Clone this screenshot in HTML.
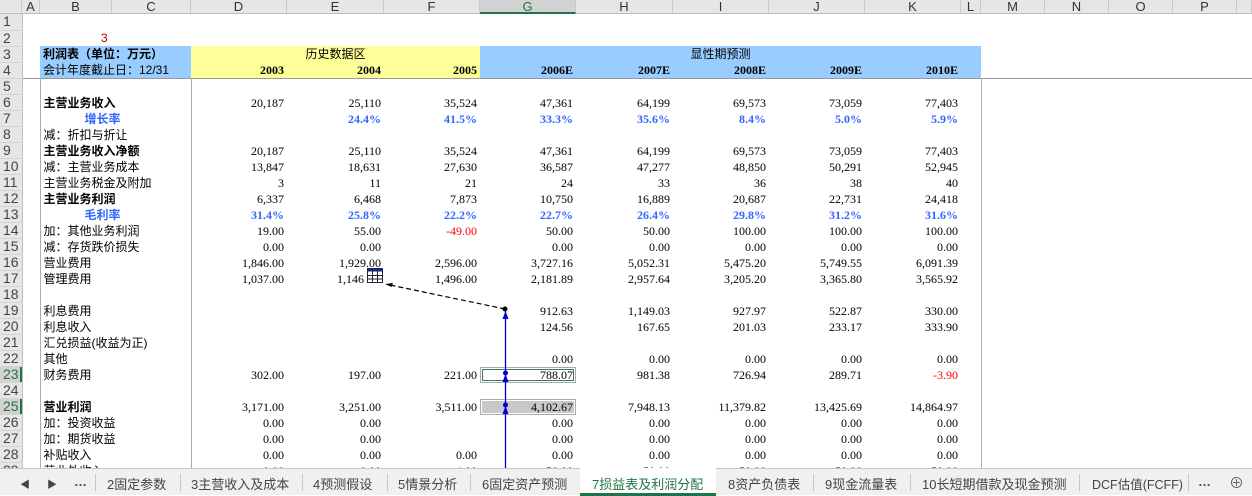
<!DOCTYPE html>
<html><head><meta charset="utf-8"><style>
*{margin:0;padding:0;box-sizing:border-box}
body{width:1252px;height:495px;overflow:hidden;background:#fff;position:relative;font-family:"Liberation Sans","Noto Sans CJK SC",sans-serif;font-size:12px;color:#000}
.ch{position:absolute;top:0;height:14px;background:#e6e6e6;border-bottom:1px solid #bdbdbd;border-right:1px solid #c8c8c8;text-align:center;font-size:13px;line-height:13px;color:#333}
.ch.sel{background:#d2d2d2;border-bottom:2px solid #217346;color:#217346}
table{position:absolute;left:0;top:14px;border-collapse:collapse;table-layout:fixed;width:1252px}
td{height:16px;padding:0 3px;white-space:nowrap;overflow:visible;line-height:16px;font-size:12px}
td.rh{background:#e6e6e6;border-right:1px solid #bdbdbd;border-bottom:1px solid #d4d4d4;color:#444;font-size:14px;padding:0 0 0 3px;line-height:15px}
td.rh.s{background:#d2d2d2;color:#217346;box-shadow:inset -2px 0 0 #217346}
.n{text-align:right;font-family:"Liberation Serif","Noto Serif CJK SC",serif}
.b{font-weight:bold}
.bl{color:#3366ff;font-weight:bold}
.r{color:#ff0000}
.blue{background:#99ccff}.yel{background:#ffff99}
td.e{border-right:1px solid #9bc}
.tabs{position:absolute;left:0;top:468px;width:1252px;height:27px;background:#f0f0f0;border-top:1px solid #c6c6c6;font-size:13px;color:#444}
.tabs span{position:absolute;top:5px}
.sep{position:absolute;top:5px;width:1px;height:17px;background:#c6c6c6}
</style></head><body>
<div class="ch" style="left:0;width:22px"></div>
<div class="ch" style="left:22px;width:18px">A</div>
<div class="ch" style="left:40px;width:72px">B</div>
<div class="ch" style="left:112px;width:79px">C</div>
<div class="ch" style="left:191px;width:96px">D</div>
<div class="ch" style="left:287px;width:97px">E</div>
<div class="ch" style="left:384px;width:96px">F</div>
<div class="ch sel" style="left:480px;width:96px">G</div>
<div class="ch" style="left:576px;width:97px">H</div>
<div class="ch" style="left:673px;width:96px">I</div>
<div class="ch" style="left:769px;width:96px">J</div>
<div class="ch" style="left:865px;width:96px">K</div>
<div class="ch" style="left:961px;width:20px">L</div>
<div class="ch" style="left:981px;width:64px">M</div>
<div class="ch" style="left:1045px;width:64px">N</div>
<div class="ch" style="left:1109px;width:64px">O</div>
<div class="ch" style="left:1173px;width:64px">P</div>
<div class="ch" style="left:1237px;width:15px"></div>
<table>
<colgroup><col style="width:22px"><col style="width:18px"><col style="width:72px"><col style="width:79px"><col style="width:96px"><col style="width:97px"><col style="width:96px"><col style="width:96px"><col style="width:97px"><col style="width:96px"><col style="width:96px"><col style="width:96px"><col style="width:20px"><col style="width:271px"></colgroup>
<tr><td class="rh">1</td><td></td><td></td><td></td><td></td><td></td><td></td><td></td><td></td><td></td><td></td><td></td><td></td><td></td></tr>
<tr><td class="rh">2</td><td></td><td colspan="2" style="color:#c00000;padding-left:61px">3</td><td></td><td></td><td></td><td></td><td></td><td></td><td></td><td></td><td></td><td></td></tr>
<tr><td class="rh">3</td><td></td><td colspan="2" class="blue b">利润表（单位：万元）</td><td colspan="3" class="yel" style="text-align:center">历史数据区</td><td colspan="6" class="blue" style="text-align:center;padding-right:23px">显性期预测</td><td></td></tr>
<tr style="border-bottom:1px solid #999"><td class="rh">4</td><td></td><td colspan="2" class="blue">会计年度截止日：12/31</td><td class="yel n b">2003</td><td class="yel n b">2004</td><td class="yel n b">2005</td><td class="blue n b">2006E</td><td class="blue n b">2007E</td><td class="blue n b">2008E</td><td class="blue n b">2009E</td><td class="blue n b">2010E</td><td class="blue"></td><td></td></tr>
<tr><td class="rh">5</td><td></td><td colspan="2" style="border-left:1px solid #aac;border-right:1px solid #aaa"></td><td></td><td></td><td></td><td></td><td></td><td></td><td></td><td></td><td class="e"></td><td></td></tr>
<tr><td class="rh">6</td><td></td><td colspan="2" class="b" style="border-left:1px solid #aac;border-right:1px solid #aaa">主营业务收入</td><td class="n">20,187</td><td class="n">25,110</td><td class="n">35,524</td><td class="n">47,361</td><td class="n">64,199</td><td class="n">69,573</td><td class="n">73,059</td><td class="n">77,403</td><td class="e"></td><td></td></tr>
<tr><td class="rh">7</td><td></td><td colspan="2" class="bl" style="padding-left:44px;border-left:1px solid #aac;border-right:1px solid #aaa">增长率</td><td></td><td class="n bl">24.4%</td><td class="n bl">41.5%</td><td class="n bl">33.3%</td><td class="n bl">35.6%</td><td class="n bl">8.4%</td><td class="n bl">5.0%</td><td class="n bl">5.9%</td><td class="e"></td><td></td></tr>
<tr><td class="rh">8</td><td></td><td colspan="2" style="border-left:1px solid #aac;border-right:1px solid #aaa">减：折扣与折让</td><td></td><td></td><td></td><td></td><td></td><td></td><td></td><td></td><td class="e"></td><td></td></tr>
<tr><td class="rh">9</td><td></td><td colspan="2" class="b" style="border-left:1px solid #aac;border-right:1px solid #aaa">主营业务收入净额</td><td class="n">20,187</td><td class="n">25,110</td><td class="n">35,524</td><td class="n">47,361</td><td class="n">64,199</td><td class="n">69,573</td><td class="n">73,059</td><td class="n">77,403</td><td class="e"></td><td></td></tr>
<tr><td class="rh">10</td><td></td><td colspan="2" style="border-left:1px solid #aac;border-right:1px solid #aaa">减：主营业务成本</td><td class="n">13,847</td><td class="n">18,631</td><td class="n">27,630</td><td class="n">36,587</td><td class="n">47,277</td><td class="n">48,850</td><td class="n">50,291</td><td class="n">52,945</td><td class="e"></td><td></td></tr>
<tr><td class="rh">11</td><td></td><td colspan="2" style="border-left:1px solid #aac;border-right:1px solid #aaa">主营业务税金及附加</td><td class="n">3</td><td class="n">11</td><td class="n">21</td><td class="n">24</td><td class="n">33</td><td class="n">36</td><td class="n">38</td><td class="n">40</td><td class="e"></td><td></td></tr>
<tr><td class="rh">12</td><td></td><td colspan="2" class="b" style="border-left:1px solid #aac;border-right:1px solid #aaa">主营业务利润</td><td class="n">6,337</td><td class="n">6,468</td><td class="n">7,873</td><td class="n">10,750</td><td class="n">16,889</td><td class="n">20,687</td><td class="n">22,731</td><td class="n">24,418</td><td class="e"></td><td></td></tr>
<tr><td class="rh">13</td><td></td><td colspan="2" class="bl" style="padding-left:44px;border-left:1px solid #aac;border-right:1px solid #aaa">毛利率</td><td class="n bl">31.4%</td><td class="n bl">25.8%</td><td class="n bl">22.2%</td><td class="n bl">22.7%</td><td class="n bl">26.4%</td><td class="n bl">29.8%</td><td class="n bl">31.2%</td><td class="n bl">31.6%</td><td class="e"></td><td></td></tr>
<tr><td class="rh">14</td><td></td><td colspan="2" style="border-left:1px solid #aac;border-right:1px solid #aaa">加：其他业务利润</td><td class="n">19.00</td><td class="n">55.00</td><td class="n r">-49.00</td><td class="n">50.00</td><td class="n">50.00</td><td class="n">100.00</td><td class="n">100.00</td><td class="n">100.00</td><td class="e"></td><td></td></tr>
<tr><td class="rh">15</td><td></td><td colspan="2" style="border-left:1px solid #aac;border-right:1px solid #aaa">减：存货跌价损失</td><td class="n">0.00</td><td class="n">0.00</td><td></td><td class="n">0.00</td><td class="n">0.00</td><td class="n">0.00</td><td class="n">0.00</td><td class="n">0.00</td><td class="e"></td><td></td></tr>
<tr><td class="rh">16</td><td></td><td colspan="2" style="border-left:1px solid #aac;border-right:1px solid #aaa">营业费用</td><td class="n">1,846.00</td><td class="n">1,929.00</td><td class="n">2,596.00</td><td class="n">3,727.16</td><td class="n">5,052.31</td><td class="n">5,475.20</td><td class="n">5,749.55</td><td class="n">6,091.39</td><td class="e"></td><td></td></tr>
<tr><td class="rh">17</td><td></td><td colspan="2" style="border-left:1px solid #aac;border-right:1px solid #aaa">管理费用</td><td class="n">1,037.00</td><td class="n" style="padding-right:4px">1,146<span style="display:inline-block;width:16px"></span></td><td class="n">1,496.00</td><td class="n">2,181.89</td><td class="n">2,957.64</td><td class="n">3,205.20</td><td class="n">3,365.80</td><td class="n">3,565.92</td><td class="e"></td><td></td></tr>
<tr><td class="rh">18</td><td></td><td colspan="2" style="border-left:1px solid #aac;border-right:1px solid #aaa"></td><td></td><td></td><td></td><td></td><td></td><td></td><td></td><td></td><td class="e"></td><td></td></tr>
<tr><td class="rh">19</td><td></td><td colspan="2" style="border-left:1px solid #aac;border-right:1px solid #aaa">利息费用</td><td></td><td></td><td></td><td class="n">912.63</td><td class="n">1,149.03</td><td class="n">927.97</td><td class="n">522.87</td><td class="n">330.00</td><td class="e"></td><td></td></tr>
<tr><td class="rh">20</td><td></td><td colspan="2" style="border-left:1px solid #aac;border-right:1px solid #aaa">利息收入</td><td></td><td></td><td></td><td class="n">124.56</td><td class="n">167.65</td><td class="n">201.03</td><td class="n">233.17</td><td class="n">333.90</td><td class="e"></td><td></td></tr>
<tr><td class="rh">21</td><td></td><td colspan="2" style="border-left:1px solid #aac;border-right:1px solid #aaa">汇兑损益(收益为正)</td><td></td><td></td><td></td><td></td><td></td><td></td><td></td><td></td><td class="e"></td><td></td></tr>
<tr><td class="rh">22</td><td></td><td colspan="2" style="border-left:1px solid #aac;border-right:1px solid #aaa">其他</td><td></td><td></td><td></td><td class="n">0.00</td><td class="n">0.00</td><td class="n">0.00</td><td class="n">0.00</td><td class="n">0.00</td><td class="e"></td><td></td></tr>
<tr><td class="rh s">23</td><td></td><td colspan="2" style="border-left:1px solid #aac;border-right:1px solid #aaa">财务费用</td><td class="n">302.00</td><td class="n">197.00</td><td class="n">221.00</td><td class="n" style="outline:1px solid #aaa;outline-offset:-1px;box-shadow:inset 0 0 0 2px #fff,inset 0 0 0 3px #3a7a5a">788.07</td><td class="n">981.38</td><td class="n">726.94</td><td class="n">289.71</td><td class="n r">-3.90</td><td class="e"></td><td></td></tr>
<tr><td class="rh">24</td><td></td><td colspan="2" style="border-left:1px solid #aac;border-right:1px solid #aaa"></td><td></td><td></td><td></td><td></td><td></td><td></td><td></td><td></td><td class="e"></td><td></td></tr>
<tr><td class="rh s">25</td><td></td><td colspan="2" class="b" style="border-left:1px solid #aac;border-right:1px solid #aaa">营业利润</td><td class="n">3,171.00</td><td class="n">3,251.00</td><td class="n">3,511.00</td><td class="n" style="background:#c8c8c8;box-shadow:inset 0 0 0 1px #aaa,inset 0 0 0 2px #fff">4,102.67</td><td class="n">7,948.13</td><td class="n">11,379.82</td><td class="n">13,425.69</td><td class="n">14,864.97</td><td class="e"></td><td></td></tr>
<tr><td class="rh">26</td><td></td><td colspan="2" style="border-left:1px solid #aac;border-right:1px solid #aaa">加：投资收益</td><td class="n">0.00</td><td class="n">0.00</td><td></td><td class="n">0.00</td><td class="n">0.00</td><td class="n">0.00</td><td class="n">0.00</td><td class="n">0.00</td><td class="e"></td><td></td></tr>
<tr><td class="rh">27</td><td></td><td colspan="2" style="border-left:1px solid #aac;border-right:1px solid #aaa">加：期货收益</td><td class="n">0.00</td><td class="n">0.00</td><td></td><td class="n">0.00</td><td class="n">0.00</td><td class="n">0.00</td><td class="n">0.00</td><td class="n">0.00</td><td class="e"></td><td></td></tr>
<tr><td class="rh">28</td><td></td><td colspan="2" style="border-left:1px solid #aac;border-right:1px solid #aaa">补贴收入</td><td class="n">0.00</td><td class="n">0.00</td><td class="n">0.00</td><td class="n">0.00</td><td class="n">0.00</td><td class="n">0.00</td><td class="n">0.00</td><td class="n">0.00</td><td class="e"></td><td></td></tr>
<tr><td class="rh">29</td><td></td><td colspan="2" style="border-left:1px solid #aac;border-right:1px solid #aaa">营业外收入</td><td class="n">0.00</td><td class="n">0.00</td><td class="n">4.00</td><td class="n">50.00</td><td class="n">50.00</td><td class="n">50.00</td><td class="n">50.00</td><td class="n">50.00</td><td class="e"></td><td></td></tr>
</table>
<svg style="position:absolute;left:0;top:0" width="1252" height="495">
<rect x="367.5" y="268.5" width="15" height="14" fill="#fff" stroke="#223" stroke-width="1"/>
<rect x="367.5" y="268.5" width="15" height="3" fill="#1a237e"/>
<path d="M367.5 275.5h15M367.5 279h15M372.5 271v11M377.5 271v11" stroke="#223" stroke-width="1"/>
<line x1="505" y1="309" x2="390" y2="285" stroke="#000" stroke-width="1.2" stroke-dasharray="5,3"/>
<path d="M385 284 l8 -1 l-1.5 4z" fill="#000"/>
<circle cx="505" cy="309" r="2.5" fill="#000"/>
<line x1="505.5" y1="311" x2="505.5" y2="468" stroke="#0000cc" stroke-width="1.3"/>
<path d="M505.5 311 l-3 8 h6z" fill="#0000cc"/>
<circle cx="505.5" cy="373" r="2.5" fill="#0000cc"/>
<path d="M505.5 374 l-3 8 h6z" fill="#0000cc"/>
<circle cx="505.5" cy="405" r="2.5" fill="#0000cc"/>
<path d="M505.5 406 l-3 8 h6z" fill="#0000cc"/>
</svg>
<div class="tabs">
<span style="left:20px;font-size:10px;top:7px">◀</span>
<span style="left:47px;font-size:10px;top:7px">▶</span>
<span style="left:74px;font-weight:bold">…</span>
<div class="sep" style="left:95px"></div>
<span style="left:107px">2固定参数</span>
<div class="sep" style="left:180px"></div>
<span style="left:191px">3主营收入及成本</span>
<div class="sep" style="left:302px"></div>
<span style="left:313px">4预测假设</span>
<div class="sep" style="left:387px"></div>
<span style="left:398px">5情景分析</span>
<div class="sep" style="left:470px"></div>
<span style="left:482px">6固定资产预测</span>
<div style="position:absolute;left:580px;top:-1px;width:136px;height:28px;background:#fff;border-bottom:3px solid #217346"></div>
<span style="left:592px;color:#217346">7损益表及利润分配</span>
<span style="left:728px">8资产负债表</span>
<div class="sep" style="left:813px"></div>
<span style="left:825px">9现金流量表</span>
<div class="sep" style="left:910px"></div>
<span style="left:922px">10长短期借款及现金预测</span>
<div class="sep" style="left:1079px"></div>
<span style="left:1092px;font-size:12.5px">DCF估值(FCFF)</span>
<div class="sep" style="left:1188px"></div>
<span style="left:1198px;font-weight:bold">…</span>
<span style="left:1229px;font-size:15px;top:3px;color:#666">⊕</span>
</div>
</body></html>
